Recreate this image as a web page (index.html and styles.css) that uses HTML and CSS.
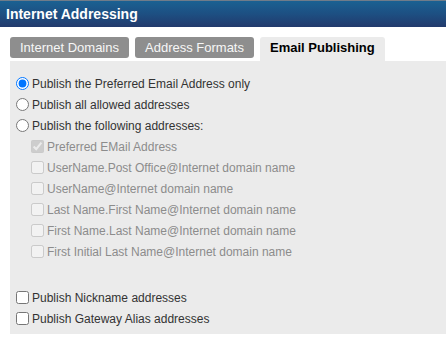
FILE: index.html
```html
<!DOCTYPE html>
<html>
<head>
<meta charset="utf-8">
<link rel="stylesheet" href="styles.css">
</head>
<body>
<div class="header">Internet Addressing</div>
<div class="tabs">
  <div class="tab">Internet Domains</div>
  <div class="tab">Address Formats</div>
  <div class="tab active">Email Publishing</div>
</div>
<div class="panel">
  <label class="row"><input type="radio" name="pub" checked><span>Publish the Preferred Email Address only</span></label>
  <label class="row"><input type="radio" name="pub"><span>Publish all allowed addresses</span></label>
  <label class="row"><input type="radio" name="pub"><span>Publish the following addresses:</span></label>
  <div class="sub">
    <label class="row dis"><input type="checkbox" checked disabled><span>Preferred EMail Address</span></label>
    <label class="row dis"><input type="checkbox" disabled><span>UserName.Post Office@Internet domain name</span></label>
    <label class="row dis"><input type="checkbox" disabled><span>UserName@Internet domain name</span></label>
    <label class="row dis"><input type="checkbox" disabled><span>Last Name.First Name@Internet domain name</span></label>
    <label class="row dis"><input type="checkbox" disabled><span>First Name.Last Name@Internet domain name</span></label>
    <label class="row dis"><input type="checkbox" disabled><span>First Initial Last Name@Internet domain name</span></label>
  </div>
  <div class="spacer"></div>
  <label class="row"><input type="checkbox"><span>Publish Nickname addresses</span></label>
  <label class="row"><input type="checkbox"><span>Publish Gateway Alias addresses</span></label>
</div>
</body>
</html>
```

FILE: styles.css
```css
html, body {
  margin: 0;
  padding: 0;
  background: #ffffff;
  font-family: "Liberation Sans", Arial, sans-serif;
}
.header {
  height: 26px;
  border-top: 1px solid #6f7c8a;
  background: linear-gradient(to bottom, #1a6192 0%, #1d4f82 50%, #223a6c 100%);
  color: #ffffff;
  font-weight: bold;
  font-size: 14px;
  line-height: 26px;
  padding-left: 6px;
}
.tabs {
  display: flex;
  gap: 6px;
  margin-top: 10px;
  padding-left: 10px;
  align-items: flex-start;
}
.tab {
  height: 21px;
  line-height: 21px;
  padding: 0 10px;
  background: #8e8e8e;
  color: #f7f7f7;
  font-size: 13px;
  border-radius: 3px;
}
.tab.active {
  height: 24px;
  background: #ebebeb;
  color: #000000;
  font-weight: bold;
  border-radius: 3px 3px 0 0;
}
.panel {
  margin-left: 10px;
  height: 261px;
  padding-top: 12px;
  padding-left: 6px;
  background: #ebebeb;
  font-size: 12px;
  color: #333333;
}
.row {
  display: flex;
  align-items: center;
  height: 21px;
  white-space: nowrap;
}
.row input {
  margin: 0 3px 0 0;
  width: 13px;
  height: 13px;
}
.sub {
  padding-left: 15px;
}
.row.dis {
  color: #8c8c8c;
}
.spacer {
  height: 25px;
}
```
